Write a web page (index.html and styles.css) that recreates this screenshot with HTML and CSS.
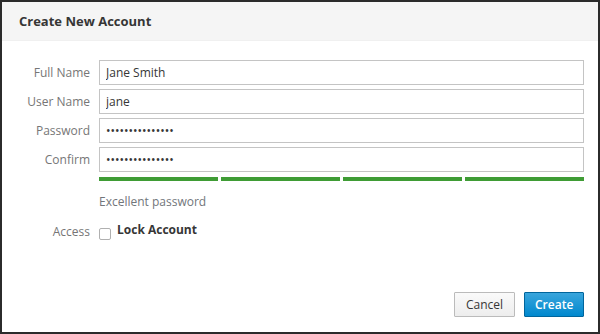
FILE: index.html
```html
<!DOCTYPE html>
<html lang="en">
<head>
<meta charset="utf-8">
<title>Create New Account</title>
<link rel="stylesheet" href="styles.css">
</head>
<body>
<div class="modal">
  <div class="modal-header">
    <h4 class="modal-title">Create New Account</h4>
  </div>
  <form class="modal-body">
    <label class="lbl" for="fn">Full Name</label>
    <input class="field" id="fn" type="text" value="Jane Smith">
    <label class="lbl" for="un">User Name</label>
    <input class="field" id="un" type="text" value="jane">
    <label class="lbl" for="pw">Password</label>
    <input class="field" id="pw" type="password" value="abcdefghijklmno">
    <label class="lbl" for="cf">Confirm</label>
    <input class="field" id="cf" type="password" value="abcdefghijklmno">
    <div class="strength">
      <span class="seg"></span><span class="seg"></span><span class="seg"></span><span class="seg"></span>
    </div>
    <div class="help">Excellent password</div>
    <div class="lbl access-lbl">Access</div>
    <label class="check">
      <input type="checkbox" class="box">
      <span class="check-text">Lock Account</span>
    </label>
  </form>
  <div class="modal-footer">
    <button type="button" class="btn btn-default">Cancel</button>
    <button type="button" class="btn btn-primary">Create</button>
  </div>
</div>
</body>
</html>
```
FILE: styles.css
```css
html, body {
  margin: 0;
  padding: 0;
  background: #fff;
}
body {
  font-family: "Open Sans", "Noto Sans", "Liberation Sans", sans-serif;
  font-size: 12px;
  color: #363636;
}
.modal {
  width: 600px;
  height: 334px;
  box-sizing: border-box;
  border: 2px solid #2b2b2b;
  display: flex;
  flex-direction: column;
  background: #fff;
}
.modal-header {
  height: 39px;
  box-sizing: border-box;
  background: #f5f5f5;
  border-bottom: 1px solid #f0f0f0;
  display: flex;
  align-items: center;
  padding-left: 17px;
}
.modal-title {
  margin: 0;
  font-size: 13px;
  font-weight: 700;
  color: #363636;
}
.modal-body {
  margin: 0;
  padding: 19px 14px 0 0;
  display: grid;
  grid-template-columns: 97px 1fr;
  row-gap: 4px;
  align-items: center;
}
.lbl {
  text-align: right;
  padding-right: 9px;
  color: #767676;
  font-size: 12px;
}
.field {
  height: 25px;
  box-sizing: border-box;
  border: 1px solid #c4c4c4;
  padding: 0 6px;
  margin: 0;
  font-family: inherit;
  font-size: 12px;
  color: #363636;
  background: #fff;
  width: 100%;
  outline: none;
  border-radius: 0;
}
.strength {
  grid-column: 2;
  display: flex;
  gap: 3px;
  margin-top: 1px;
}
.seg {
  flex: 1;
  height: 4px;
  background: #3f9c35;
}
.help {
  grid-column: 2;
  color: #72767b;
  margin-top: 8px;
  height: 17px;
  line-height: 17px;
}
.access-lbl {
  margin-top: 9px;
}
.check {
  margin-top: 9px;
  display: flex;
  align-items: flex-start;
  gap: 6px;
}
.box {
  appearance: none;
  -webkit-appearance: none;
  width: 12px;
  height: 12px;
  margin: 5px 0 0 0;
  border: 1px solid #b0b0b0;
  border-radius: 2px;
  background: #fff;
  box-sizing: border-box;
}
.check-text {
  font-weight: 700;
  color: #363636;
  line-height: 14px;
}
.modal-footer {
  margin-top: auto;
  padding: 0 14px 15px 0;
  display: flex;
  justify-content: flex-end;
  gap: 9px;
}
.btn {
  height: 25px;
  box-sizing: border-box;
  padding: 0 10px;
  font-family: inherit;
  font-size: 12px;
  border-radius: 1px;
  border: 1px solid;
  cursor: pointer;
}
.btn-default {
  width: 61px;
  color: #363636;
  border-color: #bbb;
  background: linear-gradient(to bottom, #fafafa 0, #ededed 100%);
}
.btn-primary {
  width: 60px;
  color: #fff;
  font-weight: 600;
  border-color: #00659c;
  background: linear-gradient(to bottom, #39a5dc 0, #0088ce 100%);
}
```
